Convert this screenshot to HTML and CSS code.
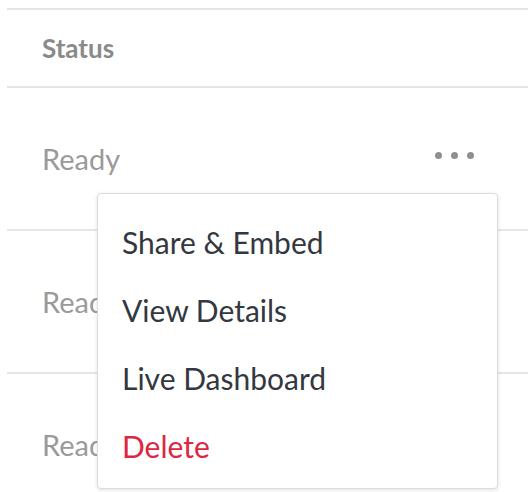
FILE: index.html
```html
<!DOCTYPE html>
<html lang="en">
<head>
<meta charset="utf-8">
<title>Dashboards</title>
<link rel="stylesheet" href="styles.css">
</head>
<body>
  <div class="table">
    <div class="row head">
      <div class="cell">Status</div>
    </div>
    <div class="row">
      <div class="cell">Ready</div>
      <button class="more" aria-label="More actions">
        <span class="dot"></span><span class="dot"></span><span class="dot"></span>
      </button>
    </div>
    <div class="row">
      <div class="cell">Ready</div>
    </div>
    <div class="row last">
      <div class="cell">Ready</div>
    </div>

    <ul class="menu">
      <li class="item">Share &amp; Embed</li>
      <li class="item">View Details</li>
      <li class="item">Live Dashboard</li>
      <li class="item danger">Delete</li>
    </ul>
  </div>
</body>
</html>
```

FILE: styles.css
```css
html, body {
  margin: 0;
  padding: 0;
  background: #fff;
  font-family: Lato, "Open Sans", sans-serif;
}

.table {
  position: relative;
  margin-top: 8px;
  margin-left: 7px;
  border-top: 2px solid #e6e6e6;
}

.row {
  display: flex;
  align-items: center;
  justify-content: space-between;
  height: 141px;
  border-bottom: 2px solid #e6e6e6;
  padding: 0 54px 0 35px;
}

.row.head {
  height: 76px;
}

.row.last {
  border-bottom: none;
}

.cell {
  font-size: 29px;
  color: #9a9a9a;
}

.head .cell {
  font-size: 26px;
  font-weight: 700;
  color: #8a8a8a;
}

.more {
  display: flex;
  gap: 9px;
  padding: 0;
  border: none;
  background: none;
  align-self: flex-start;
  margin-top: 64px;
}

.dot {
  width: 7px;
  height: 7px;
  border-radius: 50%;
  background: #8f8f8f;
}

.menu {
  position: absolute;
  left: 90px;
  top: 183px;
  width: 399px;
  margin: 0;
  padding: 14px 0 8px;
  list-style: none;
  background: #fff;
  border: 1px solid #dcdcdc;
  border-radius: 4px;
  box-shadow: 0 1px 4px rgba(0, 0, 0, 0.12);
}

.item {
  height: 68px;
  line-height: 68px;
  padding-left: 24px;
  font-size: 30px;
  color: #333840;
}

.item.danger {
  color: #e0253f;
}
```
